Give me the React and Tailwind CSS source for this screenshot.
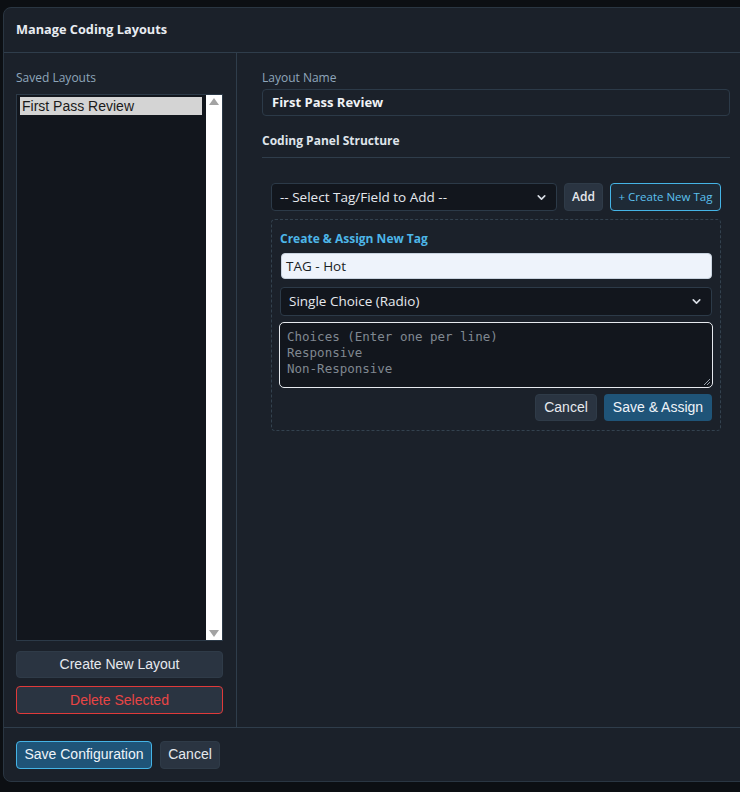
import { ChevronDown } from "lucide-react";

const ui = "font-['Open_Sans',sans-serif]";
const arial = "font-['Liberation_Sans',Arial,sans-serif]";

function SelectBox({ label, className = "" }) {
  return (
    <div
      className={`flex items-center justify-between rounded border border-[#2c3a48] bg-[#12161d] pl-2 pr-2 text-[13.5px] text-[#e6e9ee] ${ui} ${className}`}
    >
      <span>{label}</span>
      <ChevronDown size={13} strokeWidth={3} className="text-[#d8dde4]" />
    </div>
  );
}

export default function App() {
  return (
    <div className="h-[792px] w-[740px] overflow-hidden bg-[#0c0f13] pl-[3px] pt-[7px]">
      <div className="flex h-[775px] w-[760px] flex-col rounded-lg border border-[#2a3642] bg-[#1b212a]">
        {/* header */}
        <div className="flex h-[45px] shrink-0 items-center border-b border-[#2f3d4b] pl-[12px]">
          <h1 className={`text-[12.75px] font-bold text-[#e8ecf1] ${ui}`}>Manage Coding Layouts</h1>
        </div>

        {/* body */}
        <div className="flex min-h-0 flex-1">
          {/* left column */}
          <div className="flex w-[233px] shrink-0 flex-col border-r border-[#2f3d4b] pl-[12px] pr-[13px] pt-[16px]">
            <div className={`text-[12px] text-[#8fa6bb] ${ui}`}>Saved Layouts</div>
            <div className="mt-[7px] flex h-[547px] border border-[#2c3a48] bg-[#12161d]">
              <div className="flex-1 py-[2px] pl-[3px] pr-[4px]">
                <div className={`bg-[#d4d4d4] px-[2px] text-[14px] leading-[18px] text-[#1a1a1a] ${arial}`}>
                  First Pass Review
                </div>
              </div>
              <div className="flex w-[16px] flex-col items-center justify-between bg-white py-[3px]">
                <div className="h-0 w-0 border-x-[5px] border-b-[7px] border-x-transparent border-b-[#a3a3a3]" />
                <div className="h-0 w-0 border-x-[5px] border-t-[7px] border-x-transparent border-t-[#a3a3a3]" />
              </div>
            </div>
            <button
              className={`mt-[10px] h-[27px] rounded border border-[#2f3b48] bg-[#2a3441] text-[14px] text-[#e6e9ee] ${arial}`}
            >
              Create New Layout
            </button>
            <button
              className={`mt-[8px] h-[28px] rounded border border-[#e03a3a] bg-[#2a3441] text-[14px] text-[#e84545] ${arial}`}
            >
              Delete Selected
            </button>
          </div>

          {/* right column */}
          <div className="flex-1 pl-[25px] pr-[26px] pt-[16px]" style={{ maxWidth: 519 }}>
            <div className={`text-[12px] text-[#8fa6bb] ${ui}`}>Layout Name</div>
            <div
              className={`mt-[2px] flex h-[27px] items-center rounded border border-[#2c3a48] bg-[#1b212a] pl-[9px] text-[13px] font-bold text-[#f0f3f6] ${ui}`}
            >
              First Pass Review
            </div>
            <div className={`mt-[16px] text-[12px] font-bold text-[#dfe4ea] ${ui}`}>Coding Panel Structure</div>
            <div className="mt-[7px] border-b border-[#2f3d4b]" />

            <div className="pl-[9px] pr-[9px] pt-[25px]">
              <div className="flex h-[28px] gap-[7px]">
                <SelectBox label="-- Select Tag/Field to Add --" className="w-[286px] shrink-0" />
                <button
                  className={`w-[39px] shrink-0 rounded border border-[#2f3b48] bg-[#2a3441] text-[12px] font-semibold text-[#e6e9ee] ${ui}`}
                >
                  Add
                </button>
                <button
                  className={`w-[111px] shrink-0 rounded border border-[#45b4e6] bg-[#1e2a36] text-[11.5px] text-[#5cc0ee] ${ui}`}
                >
                  + Create New Tag
                </button>
              </div>

              <div className="mt-[8px] rounded border border-dashed border-[#33424f] px-[8px] pb-[9px] pt-[10px]">
                <div className={`text-[12px] font-bold text-[#4db6e8] ${ui}`}>Create &amp; Assign New Tag</div>
                <div
                  className={`mt-[5px] ml-[1px] flex h-[26px] items-center rounded border border-[#c9d3df] bg-[#eef3fb] pl-[4px] text-[13.5px] text-[#1a1f26] ${ui}`}
                >
                  TAG - Hot
                </div>
                <SelectBox label="Single Choice (Radio)" className="mt-[8px] h-[29px]" />
                <div
                  className={`relative -mx-[1px] mt-[6px] h-[66px] rounded-[5px] border border-[#e6e9ee] bg-[#12161d] px-[7px] pt-[6px] text-[12.5px] leading-[16px] text-[#808891] font-['DejaVu_Sans_Mono',monospace]`}
                >
                  <div>Choices (Enter one per line)</div>
                  <div>Responsive</div>
                  <div>Non-Responsive</div>
                  <svg className="absolute bottom-[2px] right-[2px]" width="6" height="6" viewBox="0 0 6 6">
                    <path d="M6 0 L0 6 M6 3 L3 6" stroke="#9aa3ad" strokeWidth="1" />
                  </svg>
                </div>
                <div className="mt-[6px] flex justify-end gap-[7px]">
                  <button
                    className={`h-[27px] w-[62px] rounded border border-[#2f3b48] bg-[#2a3441] text-[14px] text-[#e6e9ee] ${arial}`}
                  >
                    Cancel
                  </button>
                  <button
                    className={`h-[27px] w-[108px] rounded bg-[#1f5478] text-[14px] text-[#eef3f8] ${arial}`}
                  >
                    Save &amp; Assign
                  </button>
                </div>
              </div>
            </div>
          </div>
        </div>

        {/* footer */}
        <div className="flex h-[54px] shrink-0 items-center gap-[8px] border-t border-[#2f3d4b] pl-[12px]">
          <button
            className={`h-[28px] w-[136px] rounded border border-[#45b4e6] bg-[#1f5478] text-[14px] text-[#eef3f8] ${arial}`}
          >
            Save Configuration
          </button>
          <button
            className={`h-[28px] w-[60px] rounded border border-[#2f3b48] bg-[#2a3441] text-[14px] text-[#e6e9ee] ${arial}`}
          >
            Cancel
          </button>
        </div>
      </div>
    </div>
  );
}
